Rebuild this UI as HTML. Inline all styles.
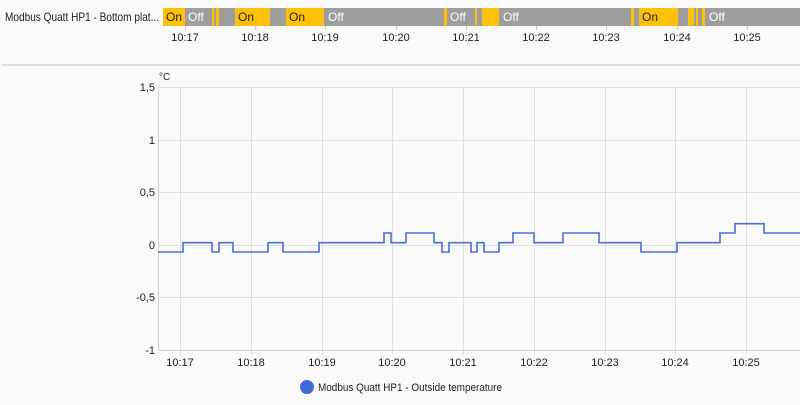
<!DOCTYPE html>
<html><head><meta charset="utf-8"><style>
html,body{margin:0;padding:0;background:#fafafa;width:800px;height:405px;overflow:hidden}
svg{display:block;font-family:"Liberation Sans",sans-serif}
</style></head><body>
<svg width="800" height="405" viewBox="0 0 800 405">
<rect width="800" height="405" fill="#fafafa"/>
<text x="5" y="21" font-size="12" fill="#212121" textLength="154" lengthAdjust="spacingAndGlyphs">Modbus Quatt HP1 - Bottom plat...</text>
<g>
<rect x="163" y="8" width="637" height="18" fill="#9e9e9e"/>
<rect x="163" y="8" width="22" height="18" fill="#ffc107"/>
<rect x="212" y="8" width="2" height="18" fill="#ffc107"/>
<rect x="216" y="8" width="3" height="18" fill="#ffc107"/>
<rect x="235" y="8" width="35" height="18" fill="#ffc107"/>
<rect x="286" y="8" width="38" height="18" fill="#ffc107"/>
<rect x="444" y="8" width="3" height="18" fill="#ffc107"/>
<rect x="475" y="8" width="2" height="18" fill="#ffc107"/>
<rect x="482" y="8" width="17" height="18" fill="#ffc107"/>
<rect x="631" y="8" width="3" height="18" fill="#ffc107"/>
<rect x="639" y="8" width="39" height="18" fill="#ffc107"/>
<rect x="688" y="8" width="6" height="18" fill="#ffc107"/>
<rect x="696" y="8" width="2" height="18" fill="#ffc107"/>
<rect x="702" y="8" width="3" height="18" fill="#ffc107"/>
</g>
<g font-size="12">
<text x="166" y="21" fill="#212121">On</text>
<text x="188" y="21" fill="#fff">Off</text>
<text x="238" y="21" fill="#212121">On</text>
<text x="289" y="21" fill="#212121">On</text>
<text x="328" y="21" fill="#fff">Off</text>
<text x="450" y="21" fill="#fff">Off</text>
<text x="503" y="21" fill="#fff">Off</text>
<text x="642" y="21" fill="#212121">On</text>
<text x="709" y="21" fill="#fff">Off</text>
</g>
<g stroke="#ccc" stroke-width="1">
<line x1="185.5" y1="26" x2="185.5" y2="30"/><line x1="255.5" y1="26" x2="255.5" y2="30"/><line x1="325.5" y1="26" x2="325.5" y2="30"/><line x1="396.5" y1="26" x2="396.5" y2="30"/><line x1="466.5" y1="26" x2="466.5" y2="30"/><line x1="536.5" y1="26" x2="536.5" y2="30"/><line x1="606.5" y1="26" x2="606.5" y2="30"/><line x1="677.5" y1="26" x2="677.5" y2="30"/><line x1="747.5" y1="26" x2="747.5" y2="30"/>
</g>
<g font-size="11" fill="#212121" text-anchor="middle">
<text x="185" y="41">10:17</text><text x="255" y="41">10:18</text><text x="325" y="41">10:19</text><text x="396" y="41">10:20</text><text x="466" y="41">10:21</text><text x="536" y="41">10:22</text><text x="606" y="41">10:23</text><text x="677" y="41">10:24</text><text x="747" y="41">10:25</text>
</g>
<rect x="2" y="64" width="798" height="2" fill="#e0e0e0"/>
<g stroke="#e0e0e0" stroke-width="1">
<line x1="158" y1="87.5" x2="800" y2="87.5"/><line x1="158" y1="140.5" x2="800" y2="140.5"/><line x1="158" y1="192.5" x2="800" y2="192.5"/><line x1="158" y1="245.5" x2="800" y2="245.5"/><line x1="158" y1="297.5" x2="800" y2="297.5"/>
<line x1="180.5" y1="87" x2="180.5" y2="355"/><line x1="251.5" y1="87" x2="251.5" y2="355"/><line x1="322.5" y1="87" x2="322.5" y2="355"/><line x1="392.5" y1="87" x2="392.5" y2="355"/><line x1="463.5" y1="87" x2="463.5" y2="355"/><line x1="534.5" y1="87" x2="534.5" y2="355"/><line x1="605.5" y1="87" x2="605.5" y2="355"/><line x1="675.5" y1="87" x2="675.5" y2="355"/><line x1="746.5" y1="87" x2="746.5" y2="355"/>
</g>
<line x1="158" y1="350.5" x2="800" y2="350.5" stroke="#d0d0d0"/>
<line x1="158.5" y1="87" x2="158.5" y2="351" stroke="#d0d0d0"/>
<g font-size="11" fill="#212121" text-anchor="end">
<text x="155" y="91">1,5</text><text x="155" y="144">1</text><text x="155" y="196">0,5</text><text x="155" y="249">0</text><text x="155" y="301">-0,5</text><text x="155" y="354">-1</text>
</g>
<text x="159" y="80" font-size="10" fill="#212121">°C</text>
<g font-size="11" fill="#212121" text-anchor="middle">
<text x="180" y="366">10:17</text><text x="251" y="366">10:18</text><text x="322" y="366">10:19</text><text x="392" y="366">10:20</text><text x="463" y="366">10:21</text><text x="534" y="366">10:22</text><text x="605" y="366">10:23</text><text x="675" y="366">10:24</text><text x="746" y="366">10:25</text>
</g>
<path fill="none" stroke="#4a6fd8" stroke-width="1.6" d="M158 252H183V242.7H212V252H219V242.7H233V252H268V242.7H283V252H319V242.7H384V233H391V242.7H406V233H434V242.7H442V252H449V242.7H471V252H477V242.7H484V252H499V242.7H513V233H534V242.7H563V233H599V242.7H641V252H677V242.7H720V233H735V223.7H764V233H800"/>
<circle cx="307" cy="387" r="7" fill="#4169d6"/>
<text x="318" y="391" font-size="11" fill="#212121" textLength="184" lengthAdjust="spacingAndGlyphs">Modbus Quatt HP1 - Outside temperature</text>
</svg>
</body></html>
